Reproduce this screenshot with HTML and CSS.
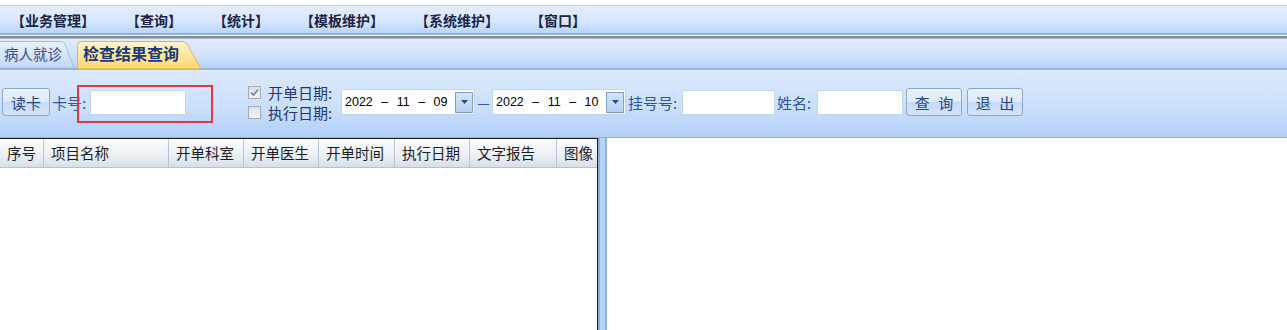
FILE: index.html
```html
<!DOCTYPE html>
<html lang="zh-CN">
<head>
    <meta charset="UTF-8">
    <title>检查结果查询</title>
    <link rel="stylesheet" href="styles.css">
</head>
<body>
    <div class="menubar">
        <span class="menu-item">【业务管理】</span>
        <span class="menu-item">【查询】</span>
        <span class="menu-item">【统计】</span>
        <span class="menu-item">【模板维护】</span>
        <span class="menu-item">【系统维护】</span>
        <span class="menu-item">【窗口】</span>
    </div>
    <div class="menu-sep"></div>

    <div class="tabstrip">
        <div class="tab">
            <svg class="tab-bg" width="75" height="27" viewBox="0 0 75 27">
                <defs>
                    <linearGradient id="tabBlue" x1="0" y1="0" x2="0" y2="1">
                        <stop offset="0" stop-color="#e8f1fe"/>
                        <stop offset="1" stop-color="#c3d9f9"/>
                    </linearGradient>
                </defs>
                <path d="M-1 0.5 H60 Q63 0.5 65 3 L74 27 H-1 Z" fill="url(#tabBlue)" stroke="#a3bbdf"/>
            </svg>
            <span class="tab-text">病人就诊</span>
        </div>
        <div class="tab tab-active">
            <svg class="tab-bg" width="125" height="28" viewBox="0 0 125 28">
                <defs>
                    <linearGradient id="tabYellow" x1="0" y1="0" x2="0" y2="1">
                        <stop offset="0" stop-color="#fff4cc"/>
                        <stop offset="0.5" stop-color="#ffe69a"/>
                        <stop offset="1" stop-color="#ffd66a"/>
                    </linearGradient>
                </defs>
                <path d="M0.5 28 V4 Q0.5 0.5 4 0.5 H105 Q108 0.5 110 3 L124 28 Z" fill="url(#tabYellow)" stroke="#d9b65e"/>
            </svg>
            <span class="tab-text">检查结果查询</span>
        </div>
    </div>

    <div class="toolbar">
        <button class="btn btn-read">读卡</button>
        <span class="lbl lbl-card">卡号:</span>
        <input class="txt txt-card" type="text">

        <div class="date-checks">
            <div class="chk-row">
                <span class="chk">
                    <svg width="9" height="9" viewBox="0 0 9 9"><path d="M1 4.5 L3.5 7 L8 1.5" fill="none" stroke="#6f84a8" stroke-width="1.6"/></svg>
                </span>
                开单日期:
            </div>
            <div class="chk-row">
                <span class="chk"></span>
                执行日期:
            </div>
        </div>

        <div class="datepick">
            <span class="dp-text">2022 – 11 – 09</span>
            <span class="dp-btn">
                <svg width="7" height="4" viewBox="0 0 7 4"><path d="M0 0 H7 L3.5 4 Z" fill="#2b4c8c"/></svg>
            </span>
        </div>
        <span class="dash">—</span>
        <div class="datepick">
            <span class="dp-text">2022 – 11 – 10</span>
            <span class="dp-btn">
                <svg width="7" height="4" viewBox="0 0 7 4"><path d="M0 0 H7 L3.5 4 Z" fill="#2b4c8c"/></svg>
            </span>
        </div>

        <span class="lbl lbl-reg">挂号号:</span>
        <input class="txt txt-reg" type="text">
        <span class="lbl lbl-name">姓名:</span>
        <input class="txt txt-name" type="text">
        <button class="btn btn-query">查 询</button>
        <button class="btn btn-exit">退 出</button>

        <div class="highlight"></div>
    </div>

    <div class="main">
        <div class="grid">
            <div class="grid-head">
                <div class="col c-no">序号</div>
                <div class="col c-name">项目名称</div>
                <div class="col c-dept">开单科室</div>
                <div class="col c-doc">开单医生</div>
                <div class="col c-time">开单时间</div>
                <div class="col c-exec">执行日期</div>
                <div class="col c-report">文字报告</div>
                <div class="col c-image">图像</div>
            </div>
        </div>
        <div class="splitter"></div>
        <div class="detail"></div>
    </div>
</body>
</html>
```

FILE: styles.css
```css
body {
    margin: 0;
    width: 1287px;
    height: 330px;
    overflow: hidden;
    background: #fff;
    font-family: "Noto Sans CJK SC", "Liberation Sans", sans-serif;
    font-size: 14px;
}

.menubar {
    margin-top: 5px;
    height: 27px;
    border-top: 1px solid #c9d3e2;
    border-bottom: 2px solid #92b2e2;
    background: linear-gradient(#e2edfd, #d8e7fc 55%, #b7d5fc);
    display: flex;
    align-items: center;
    gap: 31px;
    padding-left: 11px;
}

    .menu-item {
        font-weight: bold;
        color: #1b2445;
        line-height: 1;
    }

.menu-sep {
    height: 4px;
    background: linear-gradient(#f4f7fb 0 1px, #8b8b8b 1px 3px, #aab4c3 3px);
}

.tabstrip {
    height: 29px;
    border-bottom: 2px solid #9ab4de;
    background: linear-gradient(#e0ebfd, #cfe1fc 60%, #b4d2fb);
    display: flex;
    align-items: flex-end;
}

.tab {
    position: relative;
    height: 27px;
    display: flex;
    align-items: center;
}

    .tab .tab-bg {
        position: absolute;
        left: 0;
        top: 0;
    }

    .tab .tab-text {
        position: relative;
        color: #34508c;
        font-size: 14.5px;
        padding-left: 4px;
        padding-bottom: 3px;
    }

.tab:first-child {
    width: 75px;
}

.tab-active {
    width: 125px;
    height: 28px;
    margin-left: 2px;
    margin-bottom: -1px;
}

    .tab-active .tab-text {
        font-size: 16px;
        font-weight: bold;
        color: #173a7c;
        padding-left: 6px;
        padding-bottom: 4px;
    }

.toolbar {
    position: relative;
    height: 68px;
    box-sizing: border-box;
    border-top: 1px solid #dde9fc;
    border-bottom: 1px solid #8fb1e3;
    background: linear-gradient(#dce9fd, #cbdffb 55%, #b2cff8);
    display: flex;
    align-items: center;
    padding-bottom: 4px;
    font-size: 15px;
}

.btn {
    height: 28px;
    padding: 0;
    border: 1px solid #8ea6cb;
    border-radius: 3px;
    background: linear-gradient(#eaf1fc, #dde9fb 50%, #c6daf7 51%, #d3e3fa);
    color: #244683;
    font-family: "Noto Sans CJK SC", sans-serif;
    font-size: 15px;
    line-height: 1;
}

.btn-read {
    margin-left: 2px;
    width: 48px;
}

.btn-query {
    margin-left: 3px;
    width: 56px;
    word-spacing: 5px;
}

.btn-exit {
    margin-left: 5px;
    width: 56px;
    word-spacing: 5px;
}

.lbl {
    color: #2a55a6;
    line-height: 1;
}

.lbl-card {
    margin-left: 2px;
    width: 38px;
}

.lbl-reg {
    margin-left: 2px;
    width: 54px;
}

.lbl-name {
    margin-left: 2px;
    width: 40px;
}

.txt {
    height: 25px;
    box-sizing: border-box;
    border: 1px solid #c4d4ea;
    background: #fff;
    padding: 0 3px;
    margin: 0;
}

.txt-card {
    width: 96px;
}

.txt-reg {
    width: 93px;
}

.txt-name {
    width: 86px;
}

.date-checks {
    margin-left: 62px;
    width: 93px;
    display: flex;
    flex-direction: column;
    gap: 1px;
}

.chk-row {
    height: 19px;
    display: flex;
    align-items: center;
    color: #1f3670;
    line-height: 1;
}

.chk {
    width: 13px;
    height: 13px;
    box-sizing: border-box;
    border: 1px solid #a3abb9;
    background: linear-gradient(#dcdfe4, #f4f5f7);
    margin-right: 7px;
    display: flex;
    align-items: center;
    justify-content: center;
}

.datepick {
    width: 134px;
    height: 26px;
    box-sizing: border-box;
    border: 1px solid #c4d4ea;
    background: #fff;
    display: flex;
    align-items: center;
    justify-content: space-between;
    padding-left: 3px;
    padding-right: 1px;
}

.dp-text {
    font-family: "Liberation Sans", Arial, sans-serif;
    font-size: 12.5px;
    word-spacing: 5px;
    color: #000;
}

.dp-btn {
    width: 18px;
    height: 21px;
    box-sizing: border-box;
    border: 1px solid #7f9fd0;
    background: linear-gradient(#d6e5fa, #b5cff2);
    display: flex;
    align-items: center;
    justify-content: center;
}

.dash {
    width: 17px;
    text-align: center;
    color: #2a55a6;
    font-size: 14px;
    line-height: 1;
}

.highlight {
    position: absolute;
    left: 77px;
    top: 14px;
    width: 136px;
    height: 38px;
    box-sizing: border-box;
    border: 2px solid #e33b3b;
}

.main {
    display: flex;
    height: 192px;
}

.grid {
    width: 598px;
    box-sizing: border-box;
    border-top: 1px solid #1e1e1e;
    border-right: 1px solid #1e1e1e;
    background: #fff;
}

.grid-head {
    display: flex;
    height: 29px;
    box-sizing: border-box;
    border-bottom: 1px solid #b2c1d6;
    background: linear-gradient(#fbfcfe, #eef2f7 50%, #d8dfea);
}

    .grid-head .col {
        box-sizing: border-box;
        border-right: 1px solid #b5c5dc;
        padding-left: 7px;
        display: flex;
        align-items: center;
        color: #1c1c1c;
        font-size: 14.5px;
        line-height: 1;
    }

.c-no { width: 44px; }
.c-name { width: 125px; }
.c-dept { width: 75px; }
.c-doc { width: 75px; }
.c-time { width: 76px; }
.c-exec { width: 75px; }
.c-report { width: 87px; }

.grid-head .c-image {
    flex: 1;
    border-right: none;
}

.splitter {
    width: 9px;
    background: linear-gradient(90deg, #8aaee4 0 2px, #b9d1f3 2px 7px, #8fb1e5 7px);
}

.detail {
    flex: 1;
    background: #fff;
}
```
